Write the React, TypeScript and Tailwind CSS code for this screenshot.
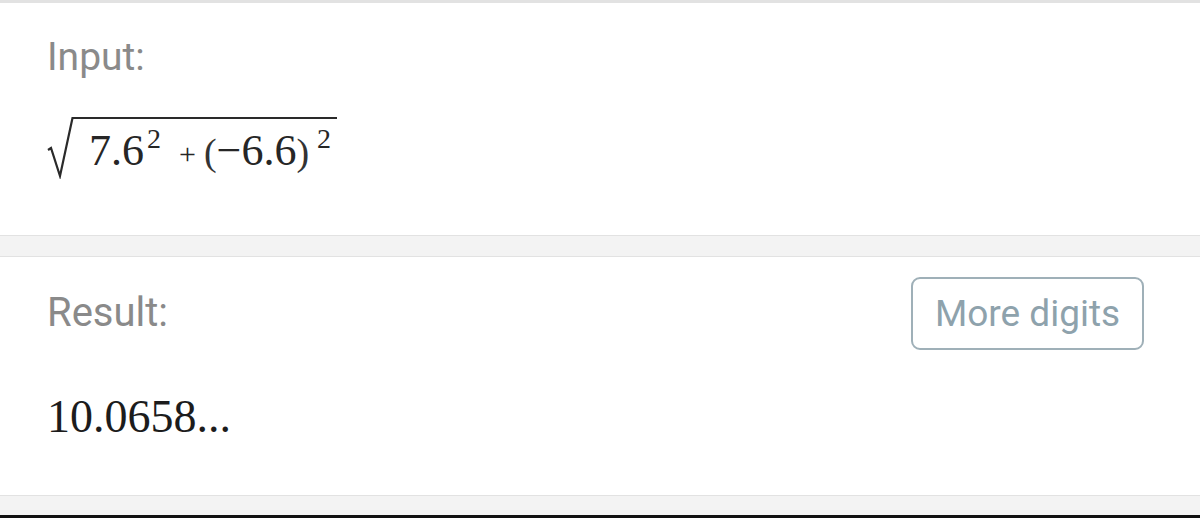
export default function App() {
  const serif = { fontFamily: '"Liberation Serif", "Times New Roman", serif' };
  const sans = { fontFamily: 'Roboto, "Noto Sans", Arial, sans-serif' };

  return (
    <div className="w-full h-[518px] bg-[#f3f3f3] flex flex-col overflow-hidden">
      {/* Input section */}
      <div className="bg-white border-t-[3px] border-b border-[#e2e2e2] h-[236px] pl-[47px] pt-[35px]">
        <p className="text-[39px] leading-none text-[#8a8a8a]" style={sans}>
          Input:
        </p>
        <div className="mt-[40px] flex items-start">
          {/* radical sign */}
          <svg width="27" height="62" viewBox="0 0 27 62" className="shrink-0">
            <path
              d="M1 33 L4 31 L13 59 L25.5 1 L27 1"
              fill="none"
              stroke="#2a2a2a"
              strokeWidth="2.2"
              strokeLinejoin="miter"
            />
          </svg>
          <div
            className="border-t-2 border-[#2a2a2a] pl-[15px] pr-[6px] pt-[10px] flex items-baseline text-[#262626]"
            style={serif}
          >
            <span className="text-[44px] leading-none">7.6</span>
            <span className="text-[28px] leading-none relative -top-[17px] ml-[3px]">2</span>
            <span className="text-[30px] leading-none ml-[18px] relative -top-[1px]">+</span>
            <span className="text-[38px] leading-none ml-[8px] text-[#333]">(</span>
            <span className="text-[44px] leading-none">−6.6</span>
            <span className="text-[38px] leading-none text-[#333]">)</span>
            <span className="text-[28px] leading-none relative -top-[17px] ml-[8px]">2</span>
          </div>
        </div>
      </div>

      {/* gray gap */}
      <div className="h-[20px]" />

      {/* Result section */}
      <div className="bg-white border-t border-b border-[#e2e2e2] h-[240px] pl-[47px] pr-[56px] pt-[20px]">
        <div className="flex items-start justify-between">
          <p className="text-[40px] leading-none text-[#8a8a8a] mt-[16px]" style={sans}>
            Result:
          </p>
          <button
            className="w-[233px] h-[73px] rounded-[9px] border-2 border-[#9fb0b8] text-[37px] leading-none text-[#8ea2ac] bg-white"
            style={sans}
          >
            More digits
          </button>
        </div>
        <p className="mt-[44px] text-[46px] leading-none text-[#1c1c1c]" style={serif}>
          10.0658...
        </p>
      </div>

      <div className="flex-1" />
      <div className="h-[3px] bg-[#111]" />
    </div>
  );
}
